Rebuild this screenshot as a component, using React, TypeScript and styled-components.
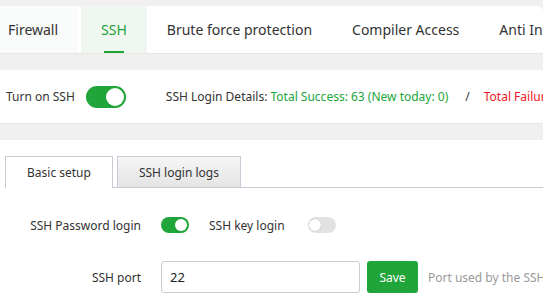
import React from 'react'
import styled, { createGlobalStyle } from 'styled-components'

const GlobalStyle = createGlobalStyle`
  html, body {
    margin: 0;
    padding: 0;
    background: #f0f0f0;
    overflow: hidden;
  }
  body {
    font-family: "Noto Sans", "Open Sans", "Noto Sans CJK SC", sans-serif;
    color: #333;
  }
`

const Page = styled.div`
  width: 620px;
  margin-left: -12px;
  padding-top: 6px;
`

const TopTabs = styled.div`
  width: 555px;
  height: 47px;
  background: #fff;
  border-radius: 0 6px 0 0;
  border-bottom: 1px solid #e6e6e6;
  display: flex;
  align-items: stretch;
  white-space: nowrap;
`

const TopTab = styled.div<{ $active?: boolean }>`
  position: relative;
  display: flex;
  align-items: center;
  padding: 0 20px;
  font-size: 14px;
  color: ${p => (p.$active ? '#20a53a' : '#333')};
  background: ${p => (p.$active ? '#f0f7f1' : 'transparent')};
  &:first-child {
    background: #f9fbfa;
    margin-right: 3px;
  }
  ${p =>
    p.$active &&
    `&::after {
      content: '';
      position: absolute;
      left: 50%;
      bottom: 0;
      width: 20px;
      margin-left: -10px;
      height: 2px;
      background: #20a53a;
    }`}
`

const StatusBar = styled.div`
  margin-top: 16px;
  height: 53px;
  background: #fff;
  border-bottom: 1px solid #e6e6e6;
  display: flex;
  align-items: center;
  padding-left: 18px;
  font-size: 12px;
  white-space: nowrap;
`

const Divider = styled.span`
  width: 1px;
  height: 18px;
  background: #dcdcdc;
  margin: 0 20px;
`

const Success = styled.span`
  color: #20a53a;
`

const Failure = styled.span`
  color: #f0131f;
`

const Slash = styled.span`
  margin: 0 14px 0 17px;
  color: #333;
`

const Switch = styled.span<{ $on?: boolean; $small?: boolean }>`
  position: relative;
  display: inline-block;
  flex: none;
  width: ${p => (p.$small ? 28 : 40)}px;
  height: ${p => (p.$small ? 16 : 22)}px;
  border-radius: 12px;
  background: ${p => (p.$on ? '#20a53a' : '#e2e2e2')};
  &::after {
    content: '';
    position: absolute;
    top: 2px;
    ${p => (p.$on ? 'right: 2px;' : 'left: 1px;')}
    width: ${p => (p.$small ? 12 : 18)}px;
    height: ${p => (p.$small ? 12 : 18)}px;
    border-radius: 50%;
    background: #fff;
    box-shadow: ${p => (p.$on ? 'none' : '0 0 1px rgba(0,0,0,0.35)')};
  }
`

const StatusLabel = styled.span`
  margin-right: 11px;
`

const MainPanel = styled.div`
  margin-top: 16px;
  background: #fff;
  padding: 16px 0 0 17px;
  height: 200px;
`

const SubTabs = styled.div`
  display: flex;
  align-items: flex-end;
  border-bottom: 1px solid #cbc8d8;
  height: 31px;
`

const SubTab = styled.div<{ $active?: boolean }>`
  box-sizing: border-box;
  padding: 0 21px;
  margin-right: 4px;
  display: flex;
  align-items: center;
  font-size: 12px;
  border: 1px solid #cbc8d8;
  border-bottom: none;
  margin-bottom: ${p => (p.$active ? '-1px' : '0')};
  height: ${p => (p.$active ? '32px' : '31px')};
  background: ${p => (p.$active ? '#fff' : 'linear-gradient(#f6f6f6, #e4e4e4)')};
`

const Form = styled.div`
  padding-top: 21px;
  display: flex;
  flex-direction: column;
  gap: 20px;
`

const Row = styled.div`
  display: flex;
  align-items: center;
  height: 32px;
  font-size: 12px;
  white-space: nowrap;
`

const Label = styled.span`
  width: 136px;
  text-align: right;
  margin-right: 20px;
`

const InlineLabel = styled.span`
  margin: 0 23px 0 20px;
`

const Input = styled.div`
  width: 199px;
  height: 32px;
  box-sizing: border-box;
  border: 1px solid #ccc;
  border-radius: 3px;
  display: flex;
  align-items: center;
  padding-left: 8px;
  font-size: 13px;
  color: #222;
`

const SaveButton = styled.button`
  margin-left: 7px;
  width: 51px;
  height: 32px;
  border: none;
  border-radius: 3px;
  background: #20a53a;
  color: #fff;
  font-family: inherit;
  font-size: 12px;
  padding: 0;
`

const Help = styled.span`
  margin-left: 10px;
  color: #999;
`

export default function App() {
  return (
    <>
      <GlobalStyle />
      <Page>
        <TopTabs>
          <TopTab>Firewall</TopTab>
          <TopTab $active>SSH</TopTab>
          <TopTab>Brute force protection</TopTab>
          <TopTab>Compiler Access</TopTab>
          <TopTab>Anti Intrusion</TopTab>
        </TopTabs>

        <StatusBar>
          <StatusLabel>Turn on SSH</StatusLabel>
          <Switch $on />
          <Divider />
          <span>SSH Login Details:&nbsp;</span>
          <Success>Total Success: 63 (New today: 0)</Success>
          <Slash>/</Slash>
          <Failure>Total Failure: 0 (New today: 0)</Failure>
        </StatusBar>

        <MainPanel>
          <SubTabs>
            <SubTab $active>Basic setup</SubTab>
            <SubTab>SSH login logs</SubTab>
          </SubTabs>
          <Form>
            <Row>
              <Label>SSH Password login</Label>
              <Switch $on $small />
              <InlineLabel>SSH key login</InlineLabel>
              <Switch $small />
            </Row>
            <Row>
              <Label>SSH port</Label>
              <Input>22</Input>
              <SaveButton>Save</SaveButton>
              <Help>Port used by the SSH service</Help>
            </Row>
          </Form>
        </MainPanel>
      </Page>
    </>
  )
}
